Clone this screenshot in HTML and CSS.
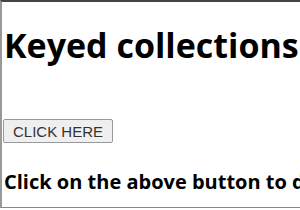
FILE: index.html
```html
<!DOCTYPE html>
<html lang="en">
<head>
    <meta charset="UTF-8">
    <title>Keyed collections</title>
    <link rel="stylesheet" href="styles.css">
</head>
<body>
    <div class="frame">
        <h1>Keyed collections</h1>
        <button>CLICK HERE</button>
        <h3>Click on the above button to display the result</h3>
    </div>
</body>
</html>
```
FILE: styles.css
```css
body {
    margin: 0;
    font-family: "Open Sans", sans-serif;
    background-color: white;
    overflow: hidden;
}

.frame {
    height: 205px;
    border-top: 2px solid #444;
    border-left: 2px solid #999;
    border-bottom: 1px solid #888;
    padding-left: 2px;
    white-space: nowrap;
    overflow: hidden;
}

h1 {
    font-size: 34px;
    margin: 20px 0 51px;
    line-height: 46px;
}

button {
    font-family: "Liberation Sans", Arial, sans-serif;
    font-size: 15px;
    color: #333;
    background-color: #efefef;
    border: 1px solid #999;
    border-radius: 2px;
    padding: 2px 9px;
    height: 24px;
    margin-left: -1px;
    display: block;
}

h3 {
    font-size: 20px;
    margin: 25px 0 0;
    line-height: 27px;
}
```
